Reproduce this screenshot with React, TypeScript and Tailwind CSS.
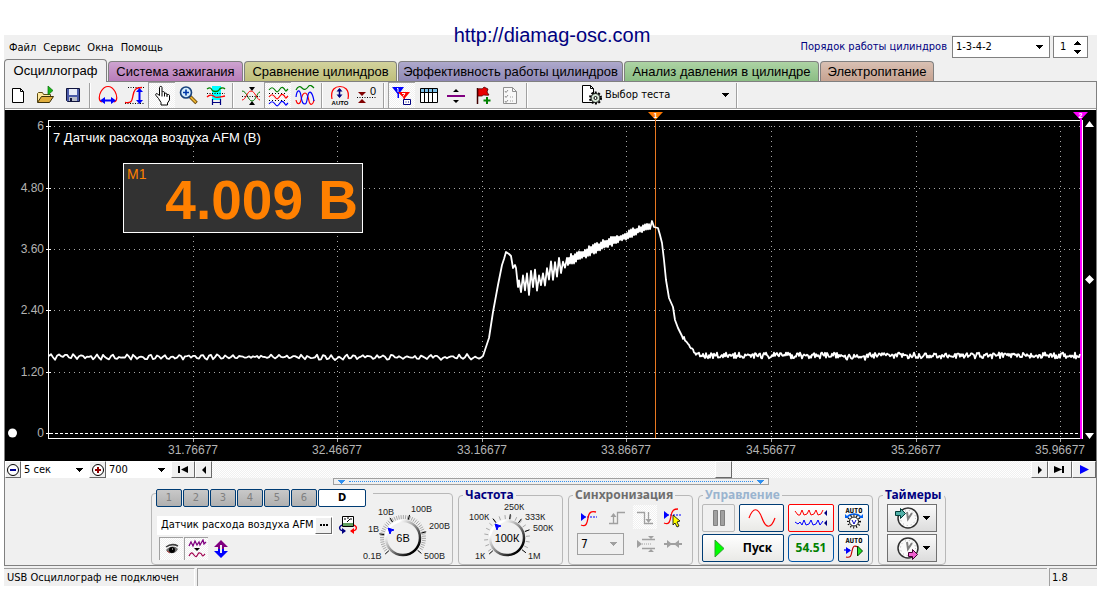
import { useState } from "react";
import type { ReactNode } from "react";
import clsx from "clsx";

const MENU = ["Файл", "Сервис", "Окна", "Помощь"];

const TABS = [
  { label: "Осциллограф", look: "w-[103px]" },
  { label: "Система зажигания", look: "w-[135px] bg-linear-to-b from-[#cda3d0] to-[#b87db9]" },
  { label: "Сравнение цилиндров", look: "w-[153px] bg-linear-to-b from-[#d2d29c] to-[#bfbf7b]" },
  { label: "Эффективность работы цилиндров", look: "w-[225px] bg-linear-to-b from-[#aea9cc] to-[#8f88b5]" },
  { label: "Анализ давления в цилиндре", look: "w-[195px] bg-linear-to-b from-[#add3a4] to-[#8bbe84]" },
  { label: "Электропитание", look: "w-[114px] bg-linear-to-b from-[#d9c0b3] to-[#c6a391]" },
];

const PRESSED = "bg-[repeating-conic-gradient(#ffffff_0_25%,#f0f0f0_0_50%)] bg-[length:2px_2px]";
const RAISED = "border border-t-white border-l-white border-r-[#696969] border-b-[#696969] bg-[#f0f0f0]";
const NAVY_BTN = "flex items-center justify-center rounded-xs border border-[#003c74] bg-linear-to-b from-white to-[#e9e9e6]";
const GREY_BTN = "flex items-center justify-center border border-[#707070] bg-linear-to-b from-[#fafafa] to-[#dcdcdc]";

/* ---------- icons ---------- */

function Icon({ size = 22, children }: { size?: number; children: ReactNode }) {
  return (
    <svg width={size} height={size} viewBox={`0 0 ${size} ${size}`} fill="none" aria-hidden="true" className="shrink-0">
      {children}
    </svg>
  );
}

function Caret({ className }: { className?: string }) {
  return (
    <svg width="7" height="4" viewBox="0 0 7 4" aria-hidden="true" className={className} shapeRendering="crispEdges">
      <path d="M0 0h7L3.5 4z" fill="currentColor" />
    </svg>
  );
}

const NewIcon = () => (
  <Icon>
    <path d="M4.5 3.5h8l3 3v11h-11z" fill="#fff" stroke="#000" />
    <path d="M12.5 3.5v3h3" stroke="#000" />
  </Icon>
);

const OpenIcon = () => (
  <Icon>
    <path d="M2.5 17V8.5l1-1h4l1 2h7V12" fill="#ffe9a0" stroke="#5c4a10" />
    <path d="M2.5 17.5l4-6h12l-4 6z" fill="#e0ad3c" stroke="#3c3008" />
    <path d="M13 1v9l5-4.5z" fill="#18b818" stroke="#0a6a0a" strokeWidth=".7" />
  </Icon>
);

const SaveIcon = () => (
  <Icon>
    <path d="M4.5 3.5h13v13h-12l-1-1z" fill="#4a5aa8" stroke="#10143c" />
    <path d="M7 4h8v6H7z" fill="#e8ecf8" />
    <path d="M7 12h8v4H7z" fill="#b8bcc8" />
    <path d="M8 13h2v3H8z" fill="#10143c" />
  </Icon>
);

const WidthIcon = () => (
  <Icon>
    <path d="M5 17C1 16 2 10 4 6.5 6 3 8.5 1.5 11 1.5s5 1.5 7 5C20 10 21 16 17 17" stroke="#f00" strokeWidth="1.2" />
    <path d="M3 15.5l5-3.5v2.5h6V12l5 3.5-5 3.5v-2.5H8V19z" fill="#00f" />
  </Icon>
);

const HeightIcon = () => (
  <Icon>
    <path d="M4 2.5h16M1 18.5h19" stroke="#000" strokeDasharray="1 1.5" />
    <path d="M1 17.5c7 1 7-2 8-7s2-8 9-8" stroke="#f00" strokeWidth="1.3" />
    <path d="M15.5 5v12" stroke="#00f" strokeWidth="2" />
    <path d="M15.5 3l3.5 4h-7zM15.5 19L12 15h7z" fill="#00f" />
  </Icon>
);

const HandIcon = () => (
  <Icon>
    <path
      d="M7.5 13.5l-2.5-3c-1-1.5.5-2.5 1.5-1.5l2 1.5v-8c0-1.5 2.5-1.5 2.5 0v5c0-1.2 2.5-1.2 2.5 0V9c0-1.2 2.5-1 2.5.2v1c0-1.2 2.5-1 2.5.3V15l-2 3v2H10v-2.5z"
      fill="#fff"
      stroke="#000"
    />
    <path d="M11 8v3.5M13.5 8.5v3M16 9.5v2.5" stroke="#000" />
  </Icon>
);

const ZoomIcon = () => (
  <Icon>
    <path d="M12 11.5l6.5 6.5" stroke="#5c3c00" strokeWidth="3.6" />
    <path d="M12.5 12l5.5 5.5" stroke="#e8b030" strokeWidth="2" />
    <circle cx="8" cy="7.5" r="5.5" fill="#d4ecfc" stroke="#16407c" strokeWidth="1.6" />
    <path d="M8 4.5v6M5 7.5h6" stroke="#0038a8" strokeWidth="1.6" />
  </Icon>
);

const CyanIcon = () => (
  <Icon>
    <path d="M7 1h9v14H7z" fill="#0ff" />
    <path d="M2 4c3-2 4-1 5 1s6 2 7 0 4-3 6-1" stroke="#008000" strokeWidth="1.3" />
    <path d="M2 8.5h18" stroke="#000" strokeDasharray="1 1.5" />
    <path d="M2 12c4-4 6-1 8 0s5 0 10-1" stroke="#f00" strokeWidth="1.3" />
    <path d="M7.5 14v6M15.5 14v6M8 17.5h7" stroke="#000080" strokeWidth="1.2" />
  </Icon>
);

const CrossIcon = () => (
  <Icon>
    <path d="M9 2h6l-3 4zM9 20h6l-3-4z" fill="#000" />
    <path d="M2 6c5 0 6 10 10 10s5-9 8-9" stroke="#007800" />
    <path d="M2 15c4 0 5-9 9-9s6 9 9 9" stroke="#f00" />
    <path d="M2 11.5h18" stroke="#000" strokeDasharray="1 1.5" />
  </Icon>
);

const WavesIcon = () => (
  <Icon>
    <path d="M2 5c2-3 4-3 6 0s3 2 5-1 4-1 5 1 1 1 3-1" stroke="#008000" strokeWidth="1.2" />
    <path d="M2 8.5h18M2 15.5h18" stroke="#000" strokeDasharray="1 2" />
    <path d="M2 12c2-3 4-3 6 0s3 2 5-1 4-1 5 1 1 1 3-1" stroke="#f00" strokeWidth="1.2" />
    <path d="M2 19c2-3 4-3 6 0s3 2 5-1 4-1 5 1 1 1 3-1" stroke="#00f" strokeWidth="1.2" />
  </Icon>
);

const OverlayIcon = () => (
  <Icon>
    <path d="M2 5c2-4 4-4 6-2s4 2 6-1 4-1 6 1" stroke="#008000" strokeWidth="1.2" />
    <path d="M2 15c1 5 4 5 5 0s2-7 4-7 3 3 4 8 4 4 5-1" stroke="#f00" strokeWidth="1.2" />
    <path d="M2 12c1-8 4-8 5-1s2 8 4 8 2-5 3-9 4-5 6 6" stroke="#00f" strokeWidth="1.2" />
  </Icon>
);

const AutoIcon = () => (
  <Icon>
    <path d="M3 14C1 4 7 1.5 11 1.5S21 4 19 14" stroke="#f00" strokeWidth="1.2" />
    <path d="M10.5 4v8" stroke="#000080" strokeWidth="1.5" />
    <path d="M10.5 3l3 3.5h-6zM10.5 13l-3-3.5h6z" fill="#000080" />
    <text x="11" y="20" textAnchor="middle" fontSize="6" fontWeight="700" fill="#000" fontFamily="Liberation Sans, sans-serif">AUTO</text>
  </Icon>
);

const ZeroIcon = () => (
  <Icon>
    <path d="M2 7h8l-4 4zM2 18h8l-4-4z" fill="#800000" />
    <path d="M1 12.5h19" stroke="#000" strokeDasharray="1 1.5" />
    <text x="14" y="10" fontSize="11" fill="#000" fontFamily="Liberation Sans, sans-serif">0</text>
  </Icon>
);

const TriggersIcon = () => (
  <Icon>
    <path d="M1 2h12L8 9v4H6.5V9z" fill="#00f" />
    <path d="M7 7h12l-5 6v5h-1.5v-5z" fill="#f00" />
    <path d="M6 3.5h1V7M11 8.5h3l-2 3" stroke="#fff" />
    <path d="M12.5 14.5h7v5h-7z" fill="#fff" stroke="#000080" />
    <path d="M14.5 17h1M17 17h1" stroke="#000080" />
  </Icon>
);

const TableIcon = () => (
  <Icon>
    <path d="M2.5 3.5h17v14h-17z" fill="#fff" stroke="#000" />
    <path d="M3 4h16v3H3z" fill="#7cc0e8" />
    <path d="M3 7.5h16M6.5 4v14M10.5 4v14M14.5 4v14" stroke="#000" />
  </Icon>
);

const SplitIcon = () => (
  <Icon>
    <path d="M2 11h18" stroke="#800080" strokeWidth="2" />
    <path d="M8 7h6l-3-3zM8 15h6l-3 3z" fill="#000" />
  </Icon>
);

const FlagIcon = () => (
  <Icon>
    <path d="M5.5 3v16" stroke="#400000" strokeWidth="1.5" />
    <path d="M6 4c3-1 4 1 6-2l4 2-1 3 2 3c-4 1-5-1-7 1H6z" fill="#e80000" stroke="#500000" strokeWidth=".8" />
    <path d="M15 12v7M11.5 15.5h7" stroke="#008000" strokeWidth="2" />
  </Icon>
);

const ChecklistIcon = () => (
  <Icon>
    <path d="M4.5 2.5h9l4 4v12h-13z" fill="#f8f8f8" stroke="#909090" />
    <path d="M13.5 2.5v4h4M6 6l1 1.5L9 5M6 11l1 1.5L9 10M6 16l1 1.5L9 15" stroke="#909090" />
    <path d="M11 12h4M11 16h4" stroke="#a0a0a0" strokeDasharray="1 1" />
  </Icon>
);

const TestIcon = () => (
  <Icon>
    <path d="M1.5 1.5h8l3 3v14h-11z" fill="#fff" stroke="#000" />
    <path d="M9.5 1.5v3h3" stroke="#000" />
    <circle cx="14.5" cy="14" r="5.5" stroke="#000" strokeWidth="2" strokeDasharray="2 1.5" />
    <circle cx="14.5" cy="14" r="4.5" fill="#d4e4d4" stroke="#000" />
    <circle cx="14.5" cy="14" r="1.5" fill="#fff" stroke="#000" />
  </Icon>
);

type Tool = { title: string; icon: () => ReactNode; pressed?: boolean };

const TOOL_GROUPS: Tool[][] = [
  [
    { title: "Новый", icon: NewIcon },
    { title: "Открыть", icon: OpenIcon },
    { title: "Сохранить", icon: SaveIcon },
  ],
  [
    { title: "Масштаб по ширине", icon: WidthIcon },
    { title: "Масштаб по высоте", icon: HeightIcon },
    { title: "Рука", icon: HandIcon, pressed: true },
    { title: "Увеличить", icon: ZoomIcon },
    { title: "Выделение", icon: CyanIcon },
  ],
  [
    { title: "Совместить", icon: CrossIcon },
    { title: "Разнести", icon: WavesIcon, pressed: true },
    { title: "Наложить", icon: OverlayIcon },
  ],
  [
    { title: "Автомасштаб", icon: AutoIcon },
    { title: "Ноль", icon: ZeroIcon },
  ],
  [
    { title: "Маркеры", icon: TriggersIcon, pressed: true },
    { title: "Таблица", icon: TableIcon },
    { title: "Разделить", icon: SplitIcon },
    { title: "Добавить метку", icon: FlagIcon },
    { title: "Отчёт", icon: ChecklistIcon },
  ],
];

function Divider() {
  return (
    <div className="flex w-2 shrink-0 justify-center py-px">
      <span className="w-0.5 border-r border-l border-r-white border-l-[#a0a0a0]" />
    </div>
  );
}

function Toolbar() {
  return (
    <div className="flex h-7 border-b border-white shadow-[inset_0_-1px_0_#a0a0a0]">
      {TOOL_GROUPS.map((group, i) => (
        <div key={i} className="flex">
          {group.map((tool) => (
            <button
              key={tool.title}
              type="button"
              aria-label={tool.title}
              className={clsx(
                "flex h-[26px] w-[27px] items-center justify-center border-t border-l",
                tool.pressed ? PRESSED + " border-[#a0a0a0]" : "border-transparent",
              )}
            >
              <tool.icon />
            </button>
          ))}
          <Divider />
        </div>
      ))}
      <button type="button" className="ml-12 flex h-[26px] w-[154px] items-center pr-1 pl-0.5 text-[11px]">
        <TestIcon />
        <span className="ml-0.5">Выбор теста</span>
        <Caret className="ml-auto" />
      </button>
      <Divider />
    </div>
  );
}

/* ---------- chart ---------- */

const Y_TICKS = [
  { y: 126, label: "6" },
  { y: 188, label: "4.80" },
  { y: 249, label: "3.60" },
  { y: 310, label: "2.40" },
  { y: 372, label: "1.20" },
  { y: 433, label: "0" },
];

const X_TICKS = [
  { x: 193, label: "31.76677" },
  { x: 337, label: "32.46677" },
  { x: 482, label: "33.16677" },
  { x: 626, label: "33.86677" },
  { x: 771, label: "34.56677" },
  { x: 916, label: "35.26677" },
  { x: 1060, label: "35.96677" },
];

function noise(n: number) {
  const v = Math.sin(n * 12.9898) * 43758.5453;
  return v - Math.floor(v) - 0.5;
}

// [x, mid level, ripple half-height]
const RAMP: [number, number, number][] = [
  [519, 283, 6], [523, 284, 12], [536, 282, 12], [545, 276, 11], [560, 268, 11], [566, 263, 7],
  [583, 254, 5], [603, 245, 5], [618, 239, 5], [627, 235, 4], [643, 228, 4], [652, 226, 3],
];

function rampPoints() {
  const pts: string[] = [];
  let side = -1;
  for (let x = 519; x < 651; x += x < 566 ? 2 : 1) {
    const i = RAMP.findIndex((p) => p[0] > x) - 1;
    const [x0, m0, a0] = RAMP[i];
    const [x1, m1, a1] = RAMP[i + 1];
    const t = (x - x0) / (x1 - x0);
    const amp = (a0 + (a1 - a0) * t) * (0.7 + noise(x) * 0.7);
    pts.push(`${x},${(m0 + (m1 - m0) * t + side * amp).toFixed(1)}`);
    side = -side;
  }
  return pts;
}

function signal() {
  const pts: string[] = [];
  for (let x = 49; x < 482; x += 2) {
    pts.push(`${x},${(357 + Math.sin(x * 0.83) * 1.6 + noise(x) * 3.2).toFixed(1)}`);
  }
  pts.push("483,356", "486,347", "489,338", "493,312", "498,285", "502,265", "504,259", "506,252", "509,254", "511,256", "513,268", "515,265", "516,268", "518,287");
  pts.push(...rampPoints());
  pts.push("652,221", "654,227", "658,228", "660,235", "662,243", "664,260", "666,280", "669,298", "673,307", "675,320", "678,328", "682,336");
  for (let x = 683; x < 704; x += 1) {
    const t = (x - 683) / 21;
    pts.push(`${x},${(337 + 18 * (1 - (1 - t) * (1 - t)) + noise(x) * 5).toFixed(1)}`);
  }
  for (let x = 704; x < 1081; x += 1) {
    pts.push(`${x},${(355.5 + noise(x) * 6 + (x > 840 && x < 870 ? 1.5 : 0)).toFixed(1)}`);
  }
  return pts.join(" ");
}

const SIGNAL = signal();

function Chart() {
  return (
    <div className="relative bg-black">
      <svg viewBox="5 110 1091 351" className="block h-auto w-full" fontFamily="Liberation Sans, Arial, sans-serif" role="img" aria-label="Осциллограмма">
        <g shapeRendering="crispEdges" fill="none">
          {Y_TICKS.slice(0, 5).map((t) => (
            <line key={t.label} x1="54" x2="1080" y1={t.y + 0.5} y2={t.y + 0.5} stroke="#a8a8a8" strokeDasharray="1 4" />
          ))}
          {X_TICKS.map((t) => (
            <line key={t.label} y1="126" y2="438" x1={t.x + 0.5} x2={t.x + 0.5} stroke="#a8a8a8" strokeDasharray="1 4" />
          ))}
          {Y_TICKS.map((t) => (
            <line key={t.y} x1="46" x2="51" y1={t.y + 0.5} y2={t.y + 0.5} stroke="#fff" />
          ))}
          {X_TICKS.map((t) => (
            <line key={t.x} y1="439" y2="442" x1={t.x + 0.5} x2={t.x + 0.5} stroke="#a8a8a8" />
          ))}
          <line x1="50" x2="1080" y1="433.5" y2="433.5" stroke="#fff" strokeDasharray="3 2" />
          <path d="M48.5 120.5H1082.5V438.5H48.5z" stroke="#fff" />
          <line x1="655.5" x2="655.5" y1="120" y2="438" stroke="#e87820" />
          <line x1="1081" x2="1081" y1="119" y2="439" stroke="#f0f" strokeWidth="2" />
        </g>
        <polyline points={SIGNAL} fill="none" stroke="#fff" strokeWidth="1.8" strokeLinejoin="round" />

        <path d="M648 112h15l-7.5 8z" fill="#ff7800" />
        <path d="M1073 112h15l-7.5 8z" fill="#f0f" />
        <g fill="#fff" fontSize="7" fontWeight="700" textAnchor="middle">
          <text x="655.5" y="118">1</text>
          <text x="1080.5" y="118">2</text>
        </g>
        <path d="M1085 127h9l-4.5-6zM1085 433h9l-4.5 6zM1089.5 275l4.5 4.5-4.5 4.5-4.5-4.5z" fill="#fff" />
        <circle cx="12.5" cy="433" r="4.5" fill="#fff" />

        <g fill="#b4b4b4" fontSize="12">
          {Y_TICKS.map((t) => (
            <text key={t.label} x="44" y={t.y + 4} textAnchor="end">{t.label}</text>
          ))}
          {X_TICKS.map((t) => (
            <text key={t.label} x={t.x} y="454" textAnchor="middle">{t.label}</text>
          ))}
        </g>
        <text x="53" y="142" fontSize="13" fill="#fff">7 Датчик расхода воздуха AFM (В)</text>
      </svg>

      <div className="absolute top-[53px] left-[118px] h-[70px] w-60 border border-white bg-[#323232] font-['Liberation_Sans',Arial,sans-serif] text-[#ff8000]">
        <span className="absolute top-0.5 left-[3px] text-sm leading-4">M1</span>
        <p className="pr-1 text-right text-[55px] leading-[72px] font-bold">4.009 В</p>
      </div>
    </div>
  );
}

/* ---------- time strip ---------- */

function Combo({ label, value, className, disabled }: { label: string; value: string; className?: string; disabled?: boolean }) {
  return (
    <div className={clsx("relative flex items-center", className)}>
      <select aria-label={label} defaultValue={value} className="w-full appearance-none bg-transparent pl-[3px] outline-none">
        <option>{value}</option>
      </select>
      <Caret className={clsx("pointer-events-none absolute right-1.5", disabled && "text-[#a0a0a0]")} />
    </div>
  );
}

function RoundSign({ plus }: { plus?: boolean }) {
  return (
    <Icon size={14}>
      <circle cx="7" cy="7" r="5.5" fill="#fff" stroke="#000" />
      <path d={plus ? "M4 7h6M7 4v6" : "M4 7h6"} stroke={plus ? "#900000" : "#000090"} strokeWidth="2" />
    </Icon>
  );
}

function TimeStrip() {
  const box = clsx("flex shrink-0 items-center justify-center", RAISED);
  return (
    <div className="flex h-[17px] bg-white text-[11px] leading-4">
      <button type="button" aria-label="Меньше времени" className={clsx(box, "w-4")}><RoundSign /></button>
      <Combo label="Развёртка" value="5 сек" className="w-[68px] shrink-0" />
      <button type="button" aria-label="Больше времени" className={clsx(box, "w-[17px]")}><RoundSign plus /></button>
      <Combo label="Масштаб" value="700" className="w-[65px] shrink-0" />
      <button type="button" aria-label="В начало" className={clsx(box, "w-6")}>
        <svg width="12" height="7" aria-hidden="true"><path d="M1 0h2v7H1zM11 0v7L4 3.5z" /></svg>
      </button>
      <button type="button" aria-label="Назад" className={clsx(box, "w-[17px]")}>
        <svg width="4" height="8" aria-hidden="true"><path d="M4 0v8L0 4z" /></svg>
      </button>
      <input
        type="range"
        min="0"
        max="1000"
        defaultValue="627"
        aria-label="Прокрутка"
        className="h-full min-w-0 flex-1 appearance-none bg-[repeating-conic-gradient(#ffffff_0_25%,#f0f0f0_0_50%)] bg-[length:2px_2px] [&::-webkit-slider-thumb]:h-[17px] [&::-webkit-slider-thumb]:w-[17px] [&::-webkit-slider-thumb]:appearance-none [&::-webkit-slider-thumb]:border [&::-webkit-slider-thumb]:border-t-white [&::-webkit-slider-thumb]:border-r-[#696969] [&::-webkit-slider-thumb]:border-b-[#696969] [&::-webkit-slider-thumb]:border-l-white [&::-webkit-slider-thumb]:bg-[#f0f0f0]"
      />
      <button type="button" aria-label="Вперёд" className={clsx(box, "w-[17px]")}>
        <svg width="4" height="8" aria-hidden="true"><path d="M0 0v8l4-4z" /></svg>
      </button>
      <button type="button" aria-label="В конец" className={clsx(box, "w-6")}>
        <svg width="12" height="7" aria-hidden="true"><path d="M0 0v7l8-3.5zM8 0h2v7H8z" /></svg>
      </button>
      <button type="button" aria-label="Воспроизвести" className={clsx(box, "w-6")}>
        <svg width="9" height="9" aria-hidden="true"><path d="M0 0v9l9-4.5z" fill="#00f" /></svg>
      </button>
    </div>
  );
}

/* ---------- control panel ---------- */

function Group({ title, tone, className, children }: { title: string; tone: string; className?: string; children: ReactNode }) {
  return (
    <fieldset className={clsx("h-[78px] min-w-0 shrink-0 rounded border border-[#b8b8b8]", className)}>
      <legend className={clsx("ml-1 px-0.5 font-['Noto_Sans',sans-serif] text-xs leading-4 font-bold", tone)}>{title}</legend>
      {children}
    </fieldset>
  );
}

type Mark = { deg: number; label: string; x: number; y: number };

function polar(deg: number, r: number) {
  const a = (deg * Math.PI) / 180;
  return [Math.sin(a) * r, -Math.cos(a) * r];
}

function Tick({ deg, from, to, color }: { deg: number; from: number; to: number; color: string }) {
  const [x1, y1] = polar(deg, from);
  const [x2, y2] = polar(deg, to);
  return <line x1={x1} y1={y1} x2={x2} y2={y2} stroke={color} />;
}

const VOLT_MARKS: Mark[] = [
  { deg: -132, label: "0.1В", x: -40, y: 21 },
  { deg: -80, label: "1В", x: -35, y: -6 },
  { deg: -33, label: "10В", x: -25, y: -23 },
  { deg: 16, label: "100В", x: 8, y: -26 },
  { deg: 75, label: "200В", x: 26, y: -9 },
  { deg: 130, label: "500В", x: 21, y: 21 },
];

const RATE_MARKS: Mark[] = [
  { deg: -132, label: "1К", x: -32, y: 21 },
  { deg: -36, label: "100К", x: -38, y: -18 },
  { deg: 8, label: "250К", x: -3, y: -28 },
  { deg: 37, label: "333К", x: 18, y: -18 },
  { deg: 70, label: "500К", x: 26, y: -7 },
  { deg: 128, label: "1М", x: 21, y: 21 },
];

function Knob({ id, label, value, marks, step, pointer }: { id: string; label: string; value: string; marks: Mark[]; step: number; pointer: [number, number] }) {
  const minor: number[] = [];
  for (let d = -125; d <= 125; d += step) minor.push(d);
  return (
    <svg width="89" height="60" viewBox="-40 -35 89 60" role="img" aria-label={label} className="shrink-0" fontFamily="Liberation Sans, Arial, sans-serif">
      <defs>
        <linearGradient id={id} x1="0" y1="0" x2="1" y2="1">
          <stop offset="0.2" stopColor="#fff" />
          <stop offset="0.5" stopColor="#909090" />
          <stop offset="0.85" stopColor="#000" />
        </linearGradient>
      </defs>
      {minor.map((d) => (
        <Tick key={d} deg={d} from={19} to={23} color="#a8a8a8" />
      ))}
      {marks.map((m) => (
        <Tick key={m.label} deg={m.deg} from={19} to={24} color="#000" />
      ))}
      <circle r="17" fill="#f0f0f0" stroke={`url(#${id})`} strokeWidth="2.5" />
      <path d="M-3-3l6 2-3 1-1 3z" fill="#00f" stroke="#00f" transform={`translate(${pointer[0]} ${pointer[1]})`} />
      <text y="4" textAnchor="middle" fontSize="11">{value}</text>
      <g fontSize="9" fill="#222">
        {marks.map((m) => (
          <text key={m.label} x={m.x} y={m.y}>{m.label}</text>
        ))}
      </g>
    </svg>
  );
}

function ChannelGroup() {
  const [name, setName] = useState("Датчик расхода воздуха AFM");
  return (
    <fieldset aria-label="Канал" className="mt-1.5 h-[72px] w-[302px] shrink-0 rounded border border-[#b8b8b8] pl-1">
      <div className="relative -mt-[5px] flex w-[217px] gap-px bg-[#f0f0f0]">
        {["1", "2", "3", "4", "5", "6"].map((n) => (
          <button key={n} type="button" className="h-[18px] w-[26px] shrink-0 rounded-xs border border-[#003c74] bg-linear-to-b from-[#c8c8c8] to-[#b0b0b0] text-[11px] leading-4 text-[#808080]">
            {n}
          </button>
        ))}
        <button type="button" className="h-[18px] w-12 rounded-xs border border-[#003c74] bg-white text-[11px] leading-4 font-bold">D</button>
      </div>
      <div className="flex items-start">
        <div className="w-[207px] shrink-0 pt-2">
          <div className="flex items-center pl-px">
            <div className="flex h-[19px] w-[176px] items-center bg-white">
              <input aria-label="Имя канала" value={name} onChange={(e) => setName(e.target.value)} className="w-[158px] bg-transparent pl-1 text-[11px] outline-none" />
              <button type="button" aria-label="Выбрать датчик" className={clsx("flex size-[17px] items-center justify-center", RAISED)}>
                <svg width="8" height="2" aria-hidden="true"><path d="M0 0h2v2H0zM3 0h2v2H3zM6 0h2v2H6z" /></svg>
              </button>
            </div>
            <button type="button" aria-label="Сменить датчик" className="ml-[5px]">
              <Icon size={20}>
                <path d="M4.5 1.5h11v10h-11z" fill="#fff" stroke="#000" />
                <path d="M5 8h10v3H5z" fill="#60a060" />
                <path d="M6 4h2M9 3h2M12 4h2M9 7l3-3" stroke="#000" />
                <path d="M4 10c-4 2-3 6 3 6" stroke="#000080" strokeWidth="1.3" />
                <path d="M16 10c4 2 3 6-3 6" stroke="#f00" strokeWidth="1.3" />
                <path d="M4 13l4 3-4 3z" fill="#000080" />
                <path d="M16 13l-4 3 4 3z" fill="#f00" />
              </Icon>
            </button>
          </div>
          <div className="mt-0.5 flex gap-px pl-[3px]">
            <button type="button" aria-label="Показать" className={clsx("flex h-[23px] w-6 items-center justify-center border-t border-l border-[#a0a0a0]", PRESSED)}>
              <Icon size={16}>
                <path d="M2 9c3-4 9-5 12-1-2 5-9 6-12 1z" fill="#707070" />
                <circle cx="8" cy="9" r="3" fill="#000" />
                <path d="M2 6c4-3 8-3 12-1" stroke="#404040" strokeWidth="1.5" />
                <path d="M3 10l3 2" stroke="#b04040" />
                <path d="M8 8h1" stroke="#fff" />
              </Icon>
            </button>
            <button type="button" aria-label="Фильтр" className={clsx("flex h-[23px] w-6 items-center justify-center border-t border-l border-[#a0a0a0]", PRESSED)}>
              <Icon size={20}>
                <path d="M2 7l2-4 2 4 2-5 2 4 2-3 1 3 3-5 1 4 2-2" stroke="#800080" strokeWidth="1.3" />
                <path d="M7 9h6l-3 3z" fill="#000" />
                <path d="M2 17c2-4 3-4 5-1s3 1 4-1 3-1 4 1 2 0 3-1" stroke="#a00050" strokeWidth="1.2" />
              </Icon>
            </button>
            <button type="button" aria-label="Сместить" className="flex h-[23px] w-6 items-center justify-center">
              <Icon size={20}>
                <path d="M10 1l7 7h-4v2H7V8H3z" fill="#800080" />
                <path d="M10 19l7-7h-4v-2H7v2H3z" fill="#00f" />
                <path d="M10 6v8" stroke="#f0f0f0" strokeWidth="2" />
              </Icon>
            </button>
          </div>
        </div>
        <div className="-mt-1">
          <Knob id="knob-volt" label="Вольты" value="6В" marks={VOLT_MARKS} step={6} pointer={[-12, -7]} />
        </div>
      </div>
    </fieldset>
  );
}

function SyncGroup() {
  return (
    <Group title="Синхронизация" tone="text-[#6e6e6e]" className="w-[125px]">
      <div className="mt-0.5 flex gap-1 pl-2">
        <button type="button" aria-label="Синхронизация по уровню">
          <Icon size={24}>
            <path d="M4 12h16" stroke="#00f" strokeDasharray="2 1" />
            <path d="M4 8v8l5-4z" fill="#00f" />
            <path d="M4 20c5 2 6-1 7-7s3-7 8-6" stroke="#f00" strokeWidth="1.3" />
          </Icon>
        </button>
        <button type="button" aria-label="По фронту">
          <Icon size={24}>
            <path d="M4 18.5h8.5v-11H20M8.5 18V9" stroke="#a0a0a0" strokeWidth="1.3" />
            <path d="M8.5 8l3 4h-6z" fill="#a0a0a0" />
          </Icon>
        </button>
        <button type="button" aria-label="По спаду" className={PRESSED}>
          <Icon size={24}>
            <path d="M4 7.5h7.5v11H20M15.5 7v9" stroke="#a0a0a0" strokeWidth="1.3" />
            <path d="M15.5 18l3-4h-6z" fill="#a0a0a0" />
          </Icon>
        </button>
        <button type="button" aria-label="Указать уровень">
          <Icon size={24}>
            <path d="M3 10h18" stroke="#00f" strokeDasharray="2 1" />
            <path d="M3 6v8l5-4z" fill="#00f" />
            <path d="M3 18c5 2 6-1 7-7s3-7 7-7" stroke="#f00" strokeWidth="1.3" />
            <path d="M12 10l7 6-3 1 2 4-2 1-2-4-2 2z" fill="#ff0" stroke="#000" strokeWidth=".8" />
          </Icon>
        </button>
      </div>
      <div className="mt-1 flex items-center pl-2">
        <Combo label="Канал синхронизации" value="7" disabled className="h-[22px] w-[47px] border border-[#a0a0a0] text-xs" />
        <button type="button" aria-label="Окно уровня" className="ml-3">
          <Icon size={22}>
            <path d="M1 7v8l5-4z" fill="#a0a0a0" />
            <path d="M6 11h9" stroke="#a0a0a0" strokeDasharray="1 1" />
            <path d="M6 6.5h13M6 15.5h13" stroke="#a0a0a0" strokeWidth="1.3" />
            <path d="M12 3h6l-3 3zM12 19h6l-3-3z" fill="#a0a0a0" />
          </Icon>
        </button>
        <button type="button" aria-label="Сжать" className="ml-1">
          <Icon size={22}>
            <path d="M2 11h18" stroke="#a0a0a0" strokeWidth="2" />
            <path d="M5 7v8l5-4zM17 7v8l-5-4z" fill="#a0a0a0" />
          </Icon>
        </button>
      </div>
    </Group>
  );
}

function ControlGroup() {
  return (
    <Group title="Управление" tone="text-[#9ab4cf]" className="w-[175px]">
      <div className="mt-px grid grid-cols-[33px_45px_46px_31px] grid-rows-[28px_28px] gap-x-1 gap-y-0.5 pl-[3px]">
        <button type="button" aria-label="Пауза" className="flex items-center justify-center rounded-xs border border-[#b8b8b8]">
          <svg width="12" height="16" aria-hidden="true"><path d="M.5.5h4v15h-4zM7.5.5h4v15h-4z" fill="#a0a0a0" stroke="#808080" /></svg>
        </button>
        <button type="button" aria-label="Режим синус" className={NAVY_BTN}>
          <svg width="28" height="20" aria-hidden="true" fill="none"><path d="M1 10C5-1 10-1 14 10s9 11 13 0" stroke="#f00" strokeWidth="1.2" /></svg>
        </button>
        <button type="button" aria-label="Режим сравнения" className="flex items-center justify-center rounded-xs border border-[#f00] bg-linear-to-b from-white to-[#e9e9e6]">
          <svg width="34" height="20" aria-hidden="true" fill="none">
            <path d="M1 3l3 4 2 0 2-5 2 5 3-1 2-4 2 5 3-1 2-4 2 5 3-1 2-4" stroke="#f00" />
            <path d="M1 14l3 2 2-2 2 3 2-5 2 5 3-1 2-4 2 5 3-1 2-4 2 5 3-4" stroke="#00f" />
            <path d="M33 2v6l-3-3zM33 12v6l-3-3z" fill="#000080" />
          </svg>
        </button>
        <button type="button" aria-label="Авто напряжение" className={NAVY_BTN}>
          <svg width="24" height="24" aria-hidden="true" fill="none">
            <text x="12" y="7" textAnchor="middle" fontSize="7" fontWeight="700" fill="#000" fontFamily="DejaVu Sans Mono, monospace">AUTO</text>
            <path d="M5 11c4-4 10-4 14 0" stroke="#0060f0" strokeWidth="1.5" />
            <path d="M3 8v4h4zM21 8v4h-4z" fill="#0060f0" />
            <circle cx="12" cy="15.5" r="6" stroke="#000" strokeWidth="2" strokeDasharray="1 2" />
            <circle cx="12" cy="15.5" r="4.5" fill="#fff" stroke="#000" />
            <path d="M10 14l2 4 2-4" stroke="#0000c0" />
          </svg>
        </button>
        <button type="button" className={clsx(NAVY_BTN, "col-span-2 pr-2 pl-2 font-['Noto_Sans',sans-serif] text-xs font-bold")}>
          <svg width="11" height="19" aria-hidden="true"><path d="M1 1v17l9-8.5z" fill="#0f0" stroke="#30a030" /></svg>
          <span className="ml-[18px]">Пуск</span>
        </button>
        <output className="flex items-center justify-center rounded border border-[#0054a6] font-['Noto_Sans',sans-serif] text-xs font-bold text-[#008000]">54.51</output>
        <button type="button" aria-label="Автозапуск" className={NAVY_BTN}>
          <svg width="24" height="24" aria-hidden="true" fill="none">
            <text x="12" y="7" textAnchor="middle" fontSize="7" fontWeight="700" fill="#000" fontFamily="DejaVu Sans Mono, monospace">AUTO</text>
            <path d="M2 14h6" stroke="#00f" strokeWidth="1.3" />
            <path d="M4 11v7l5-3.5z" fill="#00f" />
            <path d="M4 21c5 1 5-1 6-6s2-6 6-4" stroke="#c00000" strokeWidth="1.2" />
            <path d="M15.5 10v10l5-5z" fill="#20e020" stroke="#004000" />
          </svg>
        </button>
      </div>
    </Group>
  );
}

function ClockFace({ after }: { after?: boolean }) {
  return (
    <Icon size={24}>
      <circle cx="13" cy="12" r="10" fill="#fafafa" stroke="#303030" strokeWidth="1.5" />
      <circle cx="13" cy="12" r="7.5" stroke="#b0b0b0" strokeDasharray="1 3" />
      <path d="M12 6l1 7 4-6" stroke="#808080" strokeWidth="2" />
      {after ? (
        <path d="M13.5 16.5h4v-3l5 5-5 5v-3h-4z" fill="#f060d0" stroke="#400030" />
      ) : (
        <path d="M.5 5.5h5v-3l5 5-5 5v-3h-5z" fill="#50b0a8" stroke="#003c38" />
      )}
    </Icon>
  );
}

function ControlPanel() {
  return (
    <div className="flex h-[88px] flex-col items-center border-b border-[#808080]">
      <div className="flex h-[7px] w-[436px] shrink-0 items-center justify-between border border-[#a0a0a0] px-1 text-[#3090f0]">
        <Caret />
        <span className="mx-1 flex-1 border-t border-dotted border-[#3090f0]" />
        <Caret />
      </div>
      <div className="mt-0.5 flex items-start gap-[5px] pr-1">
        <ChannelGroup />
        <Group title="Частота" tone="text-[#000080]" className="w-[105px]">
          <div className="pl-2">
            <Knob id="knob-rate" label="Частота" value="100К" marks={RATE_MARKS} step={15} pointer={[-9, -11]} />
          </div>
        </Group>
        <SyncGroup />
        <ControlGroup />
        <Group title="Таймеры" tone="text-[#000080]" className="w-[68px]">
          <div className="mt-px flex flex-col items-center gap-0.5">
            <button type="button" aria-label="Таймер запуска" className={clsx(GREY_BTN, "h-7 w-[50px] gap-1")}><ClockFace /><Caret /></button>
            <button type="button" aria-label="Таймер остановки" className={clsx(GREY_BTN, "h-7 w-[50px] gap-1")}><ClockFace after /><Caret /></button>
          </div>
        </Group>
      </div>
    </div>
  );
}

export default function App() {
  const [tab, setTab] = useState(0);

  return (
    <div className="min-h-screen bg-white pr-3 pl-1 font-['DejaVu_Sans_Condensed','DejaVu_Sans',sans-serif] text-black">
      <header className="flex h-[35px] items-end justify-center pl-[3px]">
        <a href="http://diamag-osc.com" className="relative z-10 -mb-3 font-['Liberation_Sans',Arial,sans-serif] text-xl leading-6 text-[#000080]">
          http://diamag-osc.com
        </a>
      </header>

      <main className="bg-[#f0f0f0]">
        <div className="flex h-6 items-center justify-between pr-[9px] pl-[5px] text-[11px]">
          <nav className="flex gap-[7px] pt-[3px]">
            {MENU.map((m) => (
              <button key={m} type="button">{m}</button>
            ))}
          </nav>
          <div className="flex items-center">
            <label htmlFor="firing-order" className="mr-[5px] text-[#000080]">Порядок работы цилиндров</label>
            <div className="relative flex h-[22px] w-[98px] items-center border border-[#808080] bg-white">
              <select id="firing-order" defaultValue="1-3-4-2" className="h-full w-full appearance-none pl-[3px] outline-none">
                <option>1-3-4-2</option>
                <option>1-2-4-3</option>
              </select>
              <Caret className="pointer-events-none absolute right-1.5" />
            </div>
            <div className="ml-[3px] flex h-[22px] w-[35px] items-center border border-[#808080] bg-white">
              <input aria-label="Цилиндр" defaultValue="1" className="w-5 pl-1.5 outline-none" />
              <div className="flex flex-col gap-[5px]">
                <button type="button" aria-label="Больше"><Caret className="rotate-180" /></button>
                <button type="button" aria-label="Меньше"><Caret /></button>
              </div>
            </div>
          </div>
        </div>

        <div role="tablist" className="flex h-[23px] items-end gap-px border-b border-[#808080] font-['Liberation_Sans',Arial,sans-serif] text-[13px] leading-4">
          {TABS.map((t, i) => (
            <button
              key={t.label}
              type="button"
              role="tab"
              aria-selected={tab === i}
              onClick={() => setTab(i)}
              className={clsx(
                "rounded-t border border-b-0 border-[#808080] whitespace-nowrap",
                tab === i ? "-mb-px h-[23px] bg-[#f0f0f0]" : "h-5",
                t.look,
              )}
            >
              {t.label}
            </button>
          ))}
        </div>

        <div className="border-x border-[#808080]">
          <Toolbar />
          <Chart />
          <TimeStrip />
          <ControlPanel />
        </div>

        <footer className="mt-0.5 flex h-[18px] gap-0.5 text-[11px] leading-[17px]">
          <p className="w-[191px] border-t border-r border-t-[#a0a0a0] border-r-white pl-[3px]">USB Осциллограф не подключен</p>
          <p className="flex-1 border-t border-l border-[#a0a0a0]" />
          <p className="w-12 border-t border-l border-[#a0a0a0] pl-0.5">1.8</p>
        </footer>
      </main>
    </div>
  );
}
